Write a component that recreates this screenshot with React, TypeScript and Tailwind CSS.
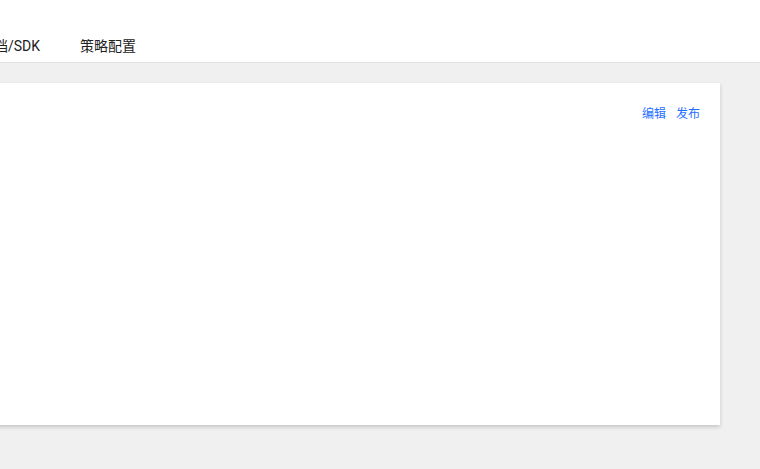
import React from "react";

export default function App() {
  const font = { fontFamily: 'Roboto, "Noto Sans CJK SC", sans-serif' };
  return (
    <div className="w-[760px] h-[469px] overflow-hidden bg-[#f0f0f0]" style={font}>
      <header className="h-[63px] bg-white border-b border-[#e3e3e3] flex items-end">
        <nav className="flex gap-[40px] pb-[6px] -ml-[20px] text-[14px] leading-[20px] text-[#222]">
          <span className="whitespace-nowrap">文档/SDK</span>
          <span className="whitespace-nowrap">策略配置</span>
        </nav>
      </header>
      <main className="pt-[20px] -ml-[20px]">
        <section className="w-[740px] h-[342px] bg-white shadow-[0_2px_4px_rgba(0,0,0,0.18)] flex justify-end pt-[23px] pr-[20px]">
          <div className="flex gap-[10px] text-[12px] text-[#1f6fff] h-[16px] leading-[16px]">
            <span>编辑</span>
            <span>发布</span>
          </div>
        </section>
      </main>
    </div>
  );
}
